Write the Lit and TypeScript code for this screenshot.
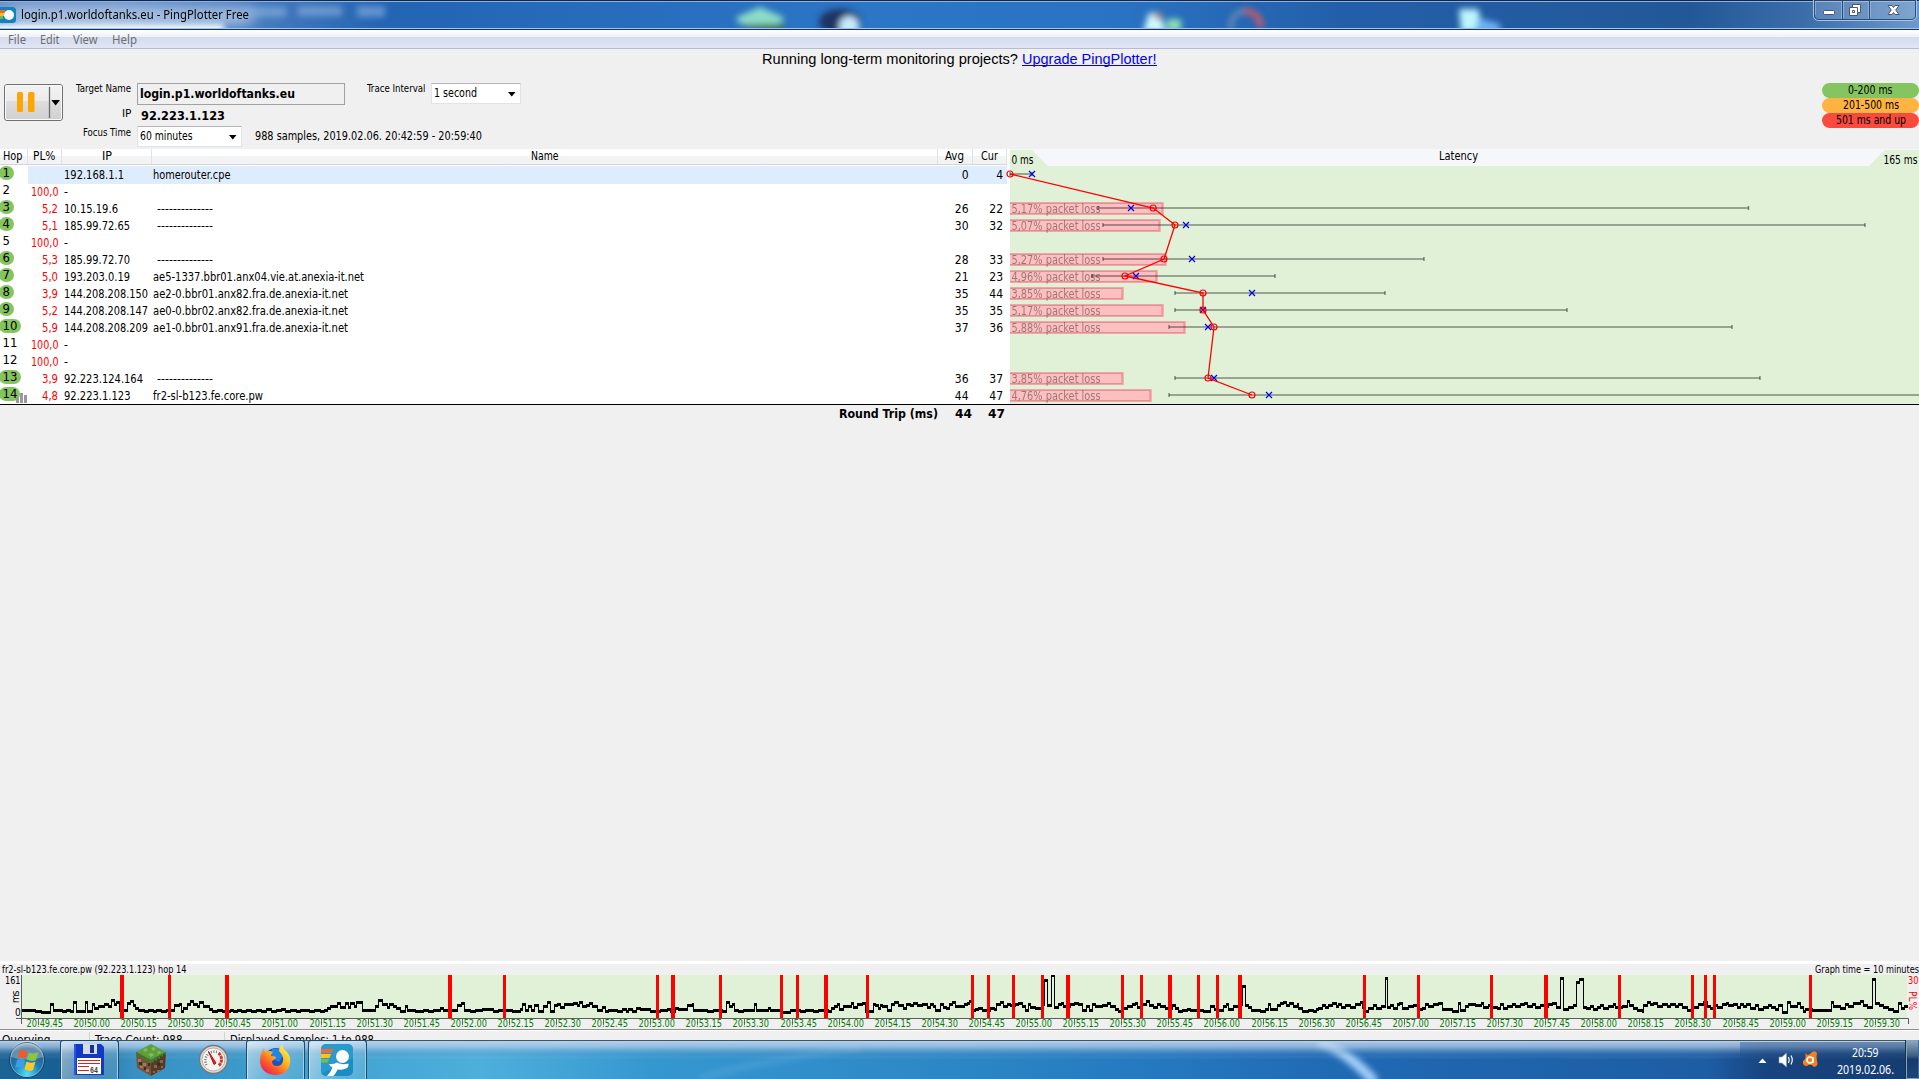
import { LitElement, html, svg, css, nothing } from "lit";
import { customElement } from "lit/decorators.js";

interface Hop {
  n: number;
  ok?: boolean;
  loss?: string;
  lossW?: number;
  ip: string;
  ipW: number;
  name?: string;
  nameW?: number;
  avg?: number;
  cur?: number;
  bar?: [string, number];
  span?: [number, number];
  avgX?: number;
  curX?: number;
}

const DASHES = "--------------";

// Horizontal values are pixels from the zero line of the latency plot.
const HOPS: Hop[] = [
  { n: 1, ok: true, ip: "192.168.1.1", ipW: 60, name: "homerouter.cpe", nameW: 77.5, avg: 0, cur: 4, span: [0, 22], avgX: 0, curX: 22 },
  { n: 2, loss: "100,0", lossW: 27.5, ip: "-", ipW: 4 },
  { n: 3, ok: true, loss: "5,2", lossW: 16, ip: "10.15.19.6", ipW: 54, name: DASHES, nameW: 56, avg: 26, cur: 22, bar: ["5,17% packet loss", 153.5], span: [88, 738.5], avgX: 143.2, curX: 121 },
  { n: 4, ok: true, loss: "5,1", lossW: 16, ip: "185.99.72.65", ipW: 66, name: DASHES, nameW: 56, avg: 30, cur: 32, bar: ["5,07% packet loss", 150.5], span: [93, 855], avgX: 165, curX: 176 },
  { n: 5, loss: "100,0", lossW: 27.5, ip: "-", ipW: 4 },
  { n: 6, ok: true, loss: "5,3", lossW: 16, ip: "185.99.72.70", ipW: 66, name: DASHES, nameW: 56, avg: 28, cur: 33, bar: ["5,27% packet loss", 156.5], span: [93, 414], avgX: 154, curX: 182 },
  { n: 7, ok: true, loss: "5,0", lossW: 16, ip: "193.203.0.19", ipW: 66, name: "ae5-1337.bbr01.anx04.vie.at.anexia-it.net", nameW: 211, avg: 21, cur: 23, bar: ["4,96% packet loss", 147.5], span: [82, 265], avgX: 115, curX: 126 },
  { n: 8, ok: true, loss: "3,9", lossW: 16, ip: "144.208.208.150", ipW: 84, name: "ae2-0.bbr01.anx82.fra.de.anexia-it.net", nameW: 195, avg: 35, cur: 44, bar: ["3,85% packet loss", 113.5], span: [165, 375], avgX: 193, curX: 242 },
  { n: 9, ok: true, loss: "5,2", lossW: 16, ip: "144.208.208.147", ipW: 84, name: "ae0-0.bbr02.anx82.fra.de.anexia-it.net", nameW: 195, avg: 35, cur: 35, bar: ["5,17% packet loss", 153.5], span: [165, 557], avgX: 193, curX: 193 },
  { n: 10, ok: true, loss: "5,9", lossW: 16, ip: "144.208.208.209", ipW: 84, name: "ae1-0.bbr01.anx91.fra.de.anexia-it.net", nameW: 195, avg: 37, cur: 36, bar: ["5,88% packet loss", 175.5], span: [159, 722], avgX: 204, curX: 198 },
  { n: 11, loss: "100,0", lossW: 27.5, ip: "-", ipW: 4 },
  { n: 12, loss: "100,0", lossW: 27.5, ip: "-", ipW: 4 },
  { n: 13, ok: true, loss: "3,9", lossW: 16, ip: "92.223.124.164", ipW: 79, name: DASHES, nameW: 56, avg: 36, cur: 37, bar: ["3,85% packet loss", 113.5], span: [165, 750], avgX: 198, curX: 204 },
  { n: 14, ok: true, loss: "4,8", lossW: 16, ip: "92.223.1.123", ipW: 66.5, name: "fr2-sl-b123.fe.core.pw", nameW: 110, avg: 44, cur: 47, bar: ["4,76% packet loss", 141.5], span: [159, 920], avgX: 242, curX: 259 },
];

// [left, width] of each lost-packet stripe on the timeline.
const LOST: [number, number][] = [
  [120, 4], [168, 3], [225, 4], [448, 4], [503, 3], [656, 3], [671, 4], [719, 3], [780, 3], [796, 3], [824, 4], [866, 3],
  [971, 3], [987, 3], [1012, 3], [1041, 3], [1066, 4], [1121, 3], [1140, 3], [1168, 4], [1197, 3], [1216, 3], [1238, 4],
  [1363, 3], [1417, 3], [1490, 3], [1544, 4], [1618, 3], [1691, 3], [1704, 3], [1713, 3], [1809, 3],
];

// Timeline samples in thirds of a pixel, one block per quarter: "start,level".
const SAMPLES: [number, string][] = [
  [0, "66,167 105,170 123,173 151,150 158,167 187,170 198,167 210,170 220,144 227,171 256,144 262,171 277,150 283,160 295,156 313,150 325,156 333,138 341,150 348,144 357,168 382,147 390,141 398,153 405,161 415,167 432,170 444,167 459,171 469,167 483,171 498,167 522,153 537,148 543,171 550,162 560,150 570,140 578,150 590,156 597,143 609,156 627,165 637,171 650,168 665,171 690,167 700,171 711,167 723,170 738,167 753,170 768,167 783,170 798,165 813,170 828,167 843,164 855,170 870,166 888,170 900,166 927,170 942,166 960,170 972,167 980,160 990,155 1010,147 1020,157 1035,147 1045,157 1050,147 1062,155 1068,144 1085,167 1125,156 1135,138 1145,150 1160,158 1167,150 1178,156 1188,160 1200,170 1214,156 1221,167 1245,171 1270,167 1285,171 1300,167 1320,160 1328,168 1372,153 1383,147 1392,168 1410,170 1425,168"],
  [480, "0,168 5,165 40,170 55,166 95,170 120,165 127,150 135,167 145,155 152,167 163,151 173,171 190,155 200,144 210,171 222,152 232,148 240,157 253,150 280,147 290,151 296,144 305,155 318,152 328,145 337,156 352,167 365,158 375,170 385,167 410,170 425,165 437,170 445,165 455,170 468,161 480,165 510,169 540,167 560,165 571,171 585,160 595,164 622,152 637,148 640,167 680,169 700,167 725,171 739,144 748,156 757,150 763,168 775,171 790,167 823,150 828,168 840,167 865,161 870,167 900,172 930,166 945,168 960,171 975,166 1000,169 1015,166 1045,171 1052,162 1062,156 1070,150 1078,163 1088,156 1112,147 1118,157 1130,150 1145,145 1155,171 1178,148 1185,152 1195,162 1200,151 1207,156 1220,168 1232,148 1243,142 1253,153 1270,160 1278,150 1290,153 1300,147 1310,153 1325,150 1340,157 1350,148 1358,155 1365,168 1380,150 1390,158 1398,162 1407,150 1415,144 1425,155"],
  [960, "0,155 12,148 20,145 26,139 33,167 45,164 55,162 65,166 90,160 103,163 108,148 120,142 128,155 140,148 150,152 165,150 175,146 187,155 195,168 204,150 210,157 225,162 243,150 252,76 260,152 273,62 281,157 295,150 302,146 308,155 330,150 342,145 355,148 365,167 378,156 388,168 397,148 405,156 425,153 440,146 450,155 465,163 475,169 490,160 500,155 515,150 525,145 532,157 545,150 558,141 567,153 580,158 592,150 600,155 615,162 636,152 645,160 653,171 665,168 680,163 690,167 730,171 750,155 762,163 775,166 790,156 798,148 805,165 820,155 833,150 846,94 854,152 865,158 873,168 900,171 915,163 923,150 930,165 950,151 960,147 968,142 978,152 987,145 998,155 1010,148 1015,160 1025,171 1045,168 1058,171 1068,165 1075,160 1085,153 1095,158 1105,152 1115,145 1127,155 1135,148 1143,158 1155,152 1170,157 1185,150 1200,144 1206,157 1210,171 1225,160 1240,153 1248,162 1262,156 1275,70 1282,157 1290,152 1300,160 1312,150 1318,145 1327,160 1345,155 1360,152 1372,163 1385,160 1395,150 1405,156 1420,150 1435,145"],
  [1440, "0,147 6,165 36,170 55,147 61,167 75,155 85,148 105,153 122,147 130,157 145,151 155,157 170,160 180,150 188,160 200,155 215,148 225,155 240,150 252,145 260,155 275,149 285,158 300,152 315,155 325,150 335,146 348,157 361,70 368,163 385,158 400,152 409,82 418,75 428,157 438,162 450,155 460,163 470,157 480,152 490,160 505,155 520,148 525,158 545,156 560,140 568,151 580,160 590,167 605,171 610,152 620,142 630,150 640,147 650,156 665,150 680,155 690,150 705,156 715,150 725,158 742,168 760,158 775,150 790,143 800,155 810,160 820,152 830,157 845,150 858,145 865,153 880,148 890,157 900,150 910,156 918,148 930,160 945,153 955,163 970,158 985,152 992,158 1005,163 1015,152 1025,172 1041,143 1050,155 1070,147 1080,158 1088,171 1095,165 1115,168 1172,143 1180,155 1200,160 1215,148 1225,155 1240,145 1260,140 1270,152 1280,157 1297,75 1306,146 1318,152 1330,157 1345,163 1358,171 1375,145 1383,160 1392,155 1400,155"],
];

const STEPS: [number, number][] = SAMPLES.flatMap(([origin, block]) =>
  block.split(" ").map((pair): [number, number] => {
    const [x, y] = pair.split(",").map(Number);
    return [origin + Math.round(x / 3), Math.round((y - 5) / 3) - 20];
  }),
);

const TICKS = Array.from({ length: 40 }, (_, i) => {
  const s = 49 * 60 + 45 + i * 15;
  const pad = (v: number) => String(v).padStart(2, "0");
  return { x: Math.floor(38.4 + i * 47.1), text: `20:${pad(Math.floor(s / 60))}.${pad(s % 60)}` };
});

/** A one-line caption set to a fixed advance width; its baseline is `base` pixels down. */
const label = (text: string, width: number, cls = "", base = 11) => html`
  <svg class="label ${cls}" width=${width} height=${base + 3}>
    <text x="0" y=${base} textLength=${width} lengthAdjust="spacingAndGlyphs">${text}</text>
  </svg>`;

@customElement("pp-titlebar")
export class PpTitlebar extends LitElement {
  static styles = css`
    :host { display: block; position: relative; height: 30px; overflow: hidden; }
    .glass { position: absolute; left: 0; top: 0; }
    .bar { position: relative; display: flex; align-items: flex-start; height: 30px; }
    .logo { margin: 7px 5px 0 0; flex: none; }
    .label { margin-top: 8px; overflow: visible; font: 13px "Noto Sans", "Open Sans", sans-serif; }
    .buttons { margin-left: auto; margin-right: 1px; }
  `;
  render() {
    return html`
      <svg class="glass" width="1919" height="30">
        <defs>
          <linearGradient id="sky">
            <stop offset="0" stop-color="#6f94c8" /><stop offset=".06" stop-color="#7096cb" />
            <stop offset=".2" stop-color="#2364b3" /><stop offset=".45" stop-color="#2c76c6" />
            <stop offset=".58" stop-color="#2a73c3" /><stop offset=".7" stop-color="#235fa9" />
            <stop offset=".88" stop-color="#225898" /><stop offset=".94" stop-color="#3b6da9" />
            <stop offset="1" stop-color="#6e99ca" />
          </linearGradient>
          <filter id="b3" x="-50%" y="-100%" width="200%" height="300%"><feGaussianBlur stdDeviation="3" /></filter>
          <filter id="b8" x="-20%" y="-100%" width="140%" height="300%"><feGaussianBlur stdDeviation="7" /></filter>
        </defs>
        <rect width="1919" height="30" fill="url(#sky)" />
        <rect x="10" y="9" width="244" height="14" rx="7" fill="#c9d9ef" opacity=".85" filter="url(#b8)" />
        <g filter="url(#b3)">
          <rect x="-10" y="24" width="234" height="12" fill="#f4ffff" />
          <g fill="#8fb2e0" opacity=".6">
            <rect x="244" y="7" width="42" height="10" /><rect x="298" y="6" width="44" height="10" /><rect x="357" y="6" width="28" height="11" />
          </g>
          <path d="M737 17L760 7L783 17V22L760 30L737 22Z" fill="#8bdcc8" />
          <path d="M738 25L760 31H784V24Z" fill="#446b52" />
          <ellipse cx="840" cy="22" rx="21" ry="13" fill="#1d3564" /><circle cx="849" cy="26" r="10" fill="#c9e9ff" />
          <path d="M1149 13H1160L1166 32H1143Z" fill="#d3f9ff" /><circle cx="1158" cy="16" r="4" fill="#b48d86" />
          <rect x="1167" y="19" width="14" height="12" fill="#8fe0b4" />
          <path d="M1232 30A16 14 0 0 1 1244 11" stroke="#7692b2" stroke-width="4" fill="none" />
          <path d="M1244 11A16 14 0 0 1 1260 28" stroke="#c95a6c" stroke-width="6" fill="none" />
          <path d="M1459 9H1478L1484 32H1461Z" fill="#bdf6ff" /><path d="M1478 18L1500 24V32H1475Z" fill="#6eb4f5" />
        </g>
        <rect width="1919" height="1" fill="#0d2550" /><rect y="1" width="1919" height="1" fill="#8fb2dc" />
        <rect y="28" width="1919" height="1" fill="#a8c4e6" /><rect y="29" width="1919" height="1" fill="#163358" />
      </svg>
      <div class="bar">
        <svg class="logo" width="16" height="17" viewBox="0 0 16 17">
          <rect x="-2" y="0" width="18" height="16" rx="3.500" fill="#1583bb" />
          <path d="M0 3H5V6H0Z" fill="#e8663c" /><path d="M0 6H4V9H0Z" fill="#f5c21e" /><path d="M0 9H3V12H0Z" fill="#72b94c" />
          <circle cx="9" cy="8" r="5" fill="#fff" />
        </svg>
        ${label("login.p1.worldoftanks.eu - PingPlotter Free", 228, "", 11)}
        <svg class="buttons" width="105" height="22" viewBox="0 0 105 22">
          <path d="M.5 0V15Q.5 20.500 6 20.500H98Q103.500 20.500 103.500 15V0" fill="#fff" fill-opacity=".13" stroke="#a9c3e2" />
          <path d="M1.500 1V15Q1.500 19.500 6 19.500H98Q102.500 19.500 102.500 15V1M29.500 1V19M56.500 1V19" fill="none" stroke="#294e80" />
          <path d="M2.500 1V15M28.500 1V19M30.500 1V18M55.500 1V19M57.500 1V18" stroke="#9db9da" opacity=".7" />
          <rect x="10.500" y="10.500" width="11" height="4" rx="1" fill="#fff" stroke="#4a5672" />
          <path d="M39.500 4.500H47.500V12.500H44.500V15.500H36.500V7.500H39.500Z" fill="#fff" stroke="#4a5672" />
          <path d="M39.500 7.500H44.500V12.500M39.500 10.500H41.500V12.500H39.500Z" fill="none" stroke="#4a5672" />
          <path d="M75 5.500H79L80.500 7.500L82 5.500H86L82.700 10L86 14.500H82L80.500 12.500L79 14.500H75L78.300 10Z" fill="#fff" stroke="#4a5672" />
        </svg>
      </div>`;
  }
}

@customElement("pp-toolbar")
export class PpToolbar extends LitElement {
  static styles = css`
    :host { display: block; height: 119px; background: #f0f0f0; font: 12px "DejaVu Sans Condensed", "DejaVu Sans", sans-serif; }
    .label { display: block; overflow: visible; flex: none; }
    .menu { display: flex; gap: 14px; height: 18px; padding-left: 7.500px; border-bottom: 1px solid #b4bdd3;
      background: linear-gradient(#fff 0, #edf1f7 7px, #d4dbed 7px, #e0e6f5 18px); }
    .menu .label { fill: #6e6e72; font: 12.500px "Noto Sans", "Open Sans", sans-serif; margin-top: 3px; }
    .banner { display: flex; gap: 4px; justify-content: center; height: 34px; }
    .promo { font: 15px "Liberation Sans", Arial, sans-serif; margin-top: 3px; }
    .link { fill: #00f; border-bottom: 1px solid #00f; height: 13px; }
    .controls { display: flex; height: 66px; padding-left: 4px; }
    .pause { margin-top: 1px; flex: none; }
    .fields { display: grid; grid-template-columns: 68px 208px; grid-template-rows: 24px 19px 23px; column-gap: 6px; }
    .caption { font-size: 10px; justify-self: end; }
    .input { display: block; box-sizing: border-box; height: 22px; border: 1px solid #a2a2a2; padding: 2px 0 0 2px; }
    .strong { font-weight: bold; font-size: 13px; }
    .ip { margin-left: 3.500px; }
    .row { display: flex; gap: 12.500px; }
    .select { display: flex; justify-content: space-between; box-sizing: border-box; height: 21px; background: #fff;
      border: 1px solid #e0e4ea; border-top-color: #b3b5bd; padding: 1px 4px 0 1.500px; flex: none; }
    .focus { width: 105px; }
    .interval { width: 89.500px; }
    .arrow { margin-top: 7px; }
    .trace { display: flex; gap: 6.400px; margin-left: 21.500px; align-items: flex-start; }
    .legend { margin-left: auto; width: 97px; }
    .pill { display: flex; justify-content: center; height: 15px; border-radius: 7.500px; }
    .good { background: #85c560; }
    .warn { background: #ffb340; }
    .bad { background: #f84b3e; }
  `;
  private arrow = html`<svg class="arrow" width="8" height="5"><path d="M0 0H7.500L3.750 4.500Z" fill="#000" /></svg>`;
  render() {
    return html`
      <div class="menu">${label("File", 18)}${label("Edit", 19.5)}${label("View", 24.5)}${label("Help", 25)}</div>
      <div class="banner">
        ${label("Running long-term monitoring projects?", 256, "promo", 12)}
        ${label("Upgrade PingPlotter!", 134.5, "promo link", 12)}
      </div>
      <div class="controls">
        <svg class="pause" width="59" height="37">
          <defs><linearGradient id="face" x2="0" y2="1">
            <stop offset="0" stop-color="#f3f3f3" /><stop offset=".46" stop-color="#ebebeb" />
            <stop offset=".46" stop-color="#dedede" /><stop offset="1" stop-color="#cfcfcf" />
          </linearGradient></defs>
          <rect x=".5" y=".5" width="58" height="36" rx="2.500" fill="url(#face)" stroke="#707070" />
          <rect x="1.500" y="1.500" width="56" height="34" rx="1.500" fill="none" stroke="#fafafa" />
          <rect x="13" y="8" width="6" height="20" rx="1.500" fill="#ffa500" /><rect x="24" y="8" width="6.500" height="20" rx="1.500" fill="#ffa500" />
          <path d="M45.500 3V34" stroke="#6b6b6b" stroke-width="1.300" /><path d="M47.300 16H56L51.650 21.500Z" fill="#000" />
        </svg>
        <div class="fields">
          ${label("Target Name", 55, "caption", 9)}
          <div class="input">${label("login.p1.worldoftanks.eu", 155, "strong", 12)}</div>
          ${label("IP", 9.5, "caption", 10)}
          ${label("92.223.1.123", 84, "strong ip", 13)}
          ${label("Focus Time", 48, "caption", 10)}
          <div class="row">
            <div class="select focus">${label("60 minutes", 52.5, "", 12)}${this.arrow}</div>
            ${label("988 samples, 2019.02.06. 20:42:59 - 20:59:40", 227, "", 14)}
          </div>
        </div>
        <div class="trace">
          ${label("Trace Interval", 58.5, "caption", 9)}
          <div class="select interval">${label("1 second", 43, "", 12)}${this.arrow}</div>
        </div>
        <div class="legend">
          <div class="pill good">${label("0-200 ms", 44.5)}</div>
          <div class="pill warn">${label("201-500 ms", 56)}</div>
          <div class="pill bad">${label("501 ms and up", 70)}</div>
        </div>
      </div>`;
  }
}

@customElement("pp-hops")
export class PpHops extends LitElement {
  static styles = css`
    :host { display: block; width: 1007px; background: #fff; font: 12px "DejaVu Sans Condensed", "DejaVu Sans", sans-serif; }
    .label { display: block; overflow: visible; }
    .line { display: grid; grid-template-columns: 28px 34px 90px 786px 34.500px 34.500px; height: 17px; }
    .head { box-sizing: border-box; height: 16px; border-bottom: 1px solid #d5d5d5; margin-bottom: 1px;
      background: linear-gradient(#fff 45%, #f3f4f6 45%, #f1f2f4); }
    .head > div { display: flex; justify-content: center; border-right: 1px solid #dfe1e5; box-sizing: border-box; }
    .head > .first { justify-content: flex-start; padding-left: 3px; }
    .badge { display: flex; align-items: flex-start; }
    .num { box-sizing: border-box; height: 14px; padding: 0 4px 0 2.500px; font-size: 13px; line-height: 13px; }
    .ok { background: #85c560; border-radius: 7px; margin-left: -1px; padding-left: 3.500px; min-width: 14px; }
    .bars { margin: 6px 0 0 -4px; flex: none; }
    .pick > div:not(.badge) { background: #deedfe; }
    .loss { display: flex; justify-content: flex-end; padding-right: 4px; fill: #f00; }
    .ip { padding-left: 2px; }
    .name { padding-left: 1px; }
    .dash { padding-left: 5px; }
    .val { text-align: right; line-height: 18px; padding-right: 4px; }
    .foot { display: flex; justify-content: flex-end; height: 20px; border-top: 1px solid #000; background: #f0f0f0;
      font-weight: bold; font-size: 13px; padding: 0 2px 0 0; gap: 16.500px; box-sizing: border-box; }
  `;
  render() {
    return html`
      <div class="line head">
        <div class="first">${label("Hop", 19.5)}</div><div>${label("PL%", 22.5)}</div><div>${label("IP", 10)}</div>
        <div>${label("Name", 27.5)}</div><div>${label("Avg", 19)}</div><div>${label("Cur", 17)}</div>
      </div>
      ${HOPS.map((h) => html`
        <div class="line ${h.n === 1 ? "pick" : ""}">
          <div class="badge">
            <span class="num ${h.ok ? "ok" : ""}">${h.n}</span>
            ${h.n === 14 ? html`<svg class="bars" width="12" height="10"><path d="M0 4H3V10H0ZM4 0H7V10H4ZM8 2H11V10H8Z" fill="#999" /></svg>` : nothing}
          </div>
          <div class="loss">${h.loss ? label(h.loss, h.lossW!, "", 13) : nothing}</div>
          <div class="ip">${label(h.ip, h.ipW, "", 13)}</div>
          <div class=${h.name === DASHES ? "dash" : "name"}>${h.name ? label(h.name, h.nameW!, "", 13) : nothing}</div>
          <div class="val">${h.avg ?? nothing}</div>
          <div class="val">${h.cur ?? nothing}</div>
        </div>`)}
      <div class="foot">${label("Round Trip (ms)", 99, "", 13)}${label("44", 17, "", 13)}${label("47", 17, "", 13)}</div>`;
  }
}

@customElement("pp-latency")
export class PpLatency extends LitElement {
  static styles = css`
    :host { display: block; flex: 1; padding-left: 3px; background: #fff; font: 12px "DejaVu Sans Condensed", "DejaVu Sans", sans-serif; }
    .plot { display: block; overflow: visible; }
    .base { background: #f0f0f0; border-top: 1px solid #000; height: 19px; margin-left: -3px; }
    .loss { fill: #000; opacity: .38; }
  `;
  render() {
    const y = (n: number) => 25 + (n - 1) * 17;
    const route = HOPS.filter((h) => h.ok).map((h) => `${h.avgX},${y(h.n)}`).join(" ");
    return html`
      <svg class="plot" width="909" height="255">
        <rect width="909" height="17" fill="#f5f7fa" />
        <path d="M0 1H22L26 5L38 17H0ZM859 17L875 1H909V17Z" fill="#e0f1d7" />
        <rect y="17" width="909" height="238" fill="#e0f1d7" />
        <text x="1.500" y="15" textLength="22" lengthAdjust="spacingAndGlyphs">0 ms</text>
        <text x="429" y="11" textLength="39" lengthAdjust="spacingAndGlyphs">Latency</text>
        <text x="873.500" y="15" textLength="34" lengthAdjust="spacingAndGlyphs">165 ms</text>
        ${HOPS.filter((h) => h.bar).map((h) => svg`
          <path d="M0 ${y(h.n) - 6}H${h.bar![1] + .5}V${y(h.n) + 7}H0Z" fill="#fdbfbf" />
          <path d="M0 ${y(h.n) - 5}H${h.bar![1] - 1}V${y(h.n) + 6}H0" fill="none" stroke="#f5a3a5" stroke-width="2" />
          <path d="M0 ${y(h.n) - 4.5}H${h.bar![1] - 1.5}V${y(h.n) + 5.5}H0" fill="none" stroke="#c98a8a" stroke-width="1" opacity=".6" />
          <text class="loss" x="1.500" y=${y(h.n) + 5} textLength="89" lengthAdjust="spacingAndGlyphs">${h.bar![0]}</text>`)}
        ${HOPS.filter((h) => h.span).map((h) => svg`
          <path d="M${h.span![0]} ${y(h.n)}H${Math.min(h.span![1], 909)}" stroke="#000" stroke-opacity=".32" stroke-width="2" />
          <path d="M${h.span![0]} ${y(h.n) - 2}v4M${h.span![1]} ${y(h.n) - 2}v4" stroke="#222" stroke-opacity=".5" stroke-width="1.500" />
          <path d="M${h.curX! - 3} ${y(h.n) - 3}l6 6m0 -6l-6 6" stroke="#00e" stroke-width="1.200" fill="none" />`)}
        <polyline points=${route} fill="none" stroke="#f00" stroke-width="1.300" />
        ${HOPS.filter((h) => h.ok).map((h) => svg`
          <circle cx=${h.avgX!} cy=${y(h.n)} r="3" fill="none" stroke="#f00" stroke-width="1.200" />`)}
      </svg>
      <div class="base"></div>`;
  }
}

@customElement("pp-timeline")
export class PpTimeline extends LitElement {
  static styles = css`
    :host { display: block; height: 79px; box-sizing: border-box; border-top: 3px solid #fff; background: #f0f0f0; overflow: hidden;
      font: 12px "DejaVu Sans Condensed", "DejaVu Sans", sans-serif; }
    .label { display: block; overflow: visible; flex: none; }
    .title { display: flex; justify-content: space-between; height: 11px; padding: 0 0 0 2px; font-size: 10px; }
    .graph { display: block; height: 54px; font-size: 10px; }
    .time { fill: #008000; }
    .red { fill: #f00; }
    .status { display: flex; border-top: 1px solid #8e8e8e; height: 10px; padding-left: 2px; box-shadow: inset 0 1px #fff; }
    .cell { height: 9px; margin-top: 2px; border-right: 1px solid #d2d2d2; box-sizing: border-box; }
    .cell .label { font-size: 13px; }
    .one { width: 88px; }
    .two { width: 135px; padding-left: 5px; }
    .three { padding-left: 5px; border: 0; }
  `;
  render() {
    const line = STEPS.map(([x, y], i) => {
      const next = STEPS[i + 1];
      if (!next) return "";
      const top = Math.min(y, next[1]);
      return `M${x} ${y}H${next[0] + 1}v3H${x}Z` + `M${next[0]} ${top}h1V${Math.max(y, next[1]) + 3}h-1Z`;
    }).join("");
    return html`
      <div class="title">
        ${label("fr2-sl-b123.fe.core.pw (92.223.1.123) hop 14", 184.5, "", 9)}
        ${label("Graph time = 10 minutes", 104, "", 9)}
      </div>
      <svg class="graph" width="1919" height="54">
        <rect x="22" width="1885" height="43" fill="#e0f1d7" />
        ${TICKS.map((t) => svg`<path d="M${t.x + .5} 43v7" stroke="#6a6a6a" />
          <text class="time" x=${t.x - 11.5} y="52" textLength="36.500" lengthAdjust="spacingAndGlyphs">${t.text}</text>`)}
        <path d=${line} fill="#000" />
        ${LOST.map(([x, w]) => svg`<rect x=${x} width=${w} height="43" fill="#f00" />`)}
        <path d="M21.500 0V49M16 43.500H1908.500V49" fill="none" stroke="#5c5c5c" />
        <text x="5" y="9" textLength="15.500" lengthAdjust="spacingAndGlyphs">161</text>
        <text x="15" y="41">0</text>
        <text transform="translate(19 28) rotate(-90)" textLength="12.500">ms</text>
        <text class="red" x="1908" y="9" textLength="10.500" lengthAdjust="spacingAndGlyphs">30</text>
        <text class="red" transform="translate(1909 16) rotate(90)" textLength="19" lengthAdjust="spacingAndGlyphs">PL%</text>
      </svg>
      <div class="status">
        <div class="cell one">${label("Querying", 48.5, "", 12)}</div>
        <div class="cell two">${label("Trace Count: 988", 87.5, "", 12)}</div>
        <div class="cell three">${label("Displayed Samples: 1 to 988", 144, "", 12)}</div>
      </div>`;
  }
}

@customElement("win-taskbar")
export class WinTaskbar extends LitElement {
  static styles = css`
    :host { display: block; position: relative; height: 39px; overflow: hidden; }
    .glass { position: absolute; left: 0; top: 0; }
    .bar { position: relative; display: flex; height: 39px; }
    .start { width: 60px; }
    .btn { box-sizing: border-box; width: 59px; height: 39px; padding: 4px 2px 0 0; text-align: center; }
    .open { border: 1px solid #1d4b6e; border-bottom: 0; border-radius: 3px 3px 0 0; padding-top: 3px;
      box-shadow: inset 1px 1px #c9dfee, inset -1px 0 #a8cde3; background: linear-gradient(115deg, #ffffff88, #ffffff30 60%, #ffffff18); }
    .cube { width: 65px; }
    .gauge { width: 62px; }
    .gap { margin-left: 3px; }
    .tray { display: flex; margin-left: auto; }
    .clock { display: flex; flex-direction: column; align-items: center; width: 57px; margin: 0 12px 0 18px; fill: #fff;
      font: 12px "Noto Sans", "Open Sans", sans-serif; }
    .label { display: block; overflow: visible; margin-top: 6px; flex: none; }
    .date { margin-top: 0; }
    .peek { width: 13px; box-sizing: border-box; border: 1px solid #86a2bd; border-right-color: #46698f; box-shadow: -1px 0 #17324f;
      background: linear-gradient(#8da7bd, #3d5f82 40%, #17396a 50%, #1c4677); }
    .icons { margin-top: 8px; }
  `;
  render() {
    return html`
      <svg class="glass" width="1919" height="39">
        <defs>
          <linearGradient id="deep">
            <stop offset="0" stop-color="#1c6394" /><stop offset=".03" stop-color="#185f94" /><stop offset=".07" stop-color="#3891c2" />
            <stop offset=".13" stop-color="#3b9bcb" /><stop offset=".25" stop-color="#4fafdb" /><stop offset=".34" stop-color="#3597d0" />
            <stop offset=".5" stop-color="#2c86c5" /><stop offset=".6" stop-color="#2579bf" /><stop offset=".7" stop-color="#2069b3" />
            <stop offset=".89" stop-color="#1d5da4" /><stop offset=".92" stop-color="#184480" /><stop offset="1" stop-color="#153c70" />
          </linearGradient>
          <linearGradient id="shine" x2="0" y2="1">
            <stop offset="0" stop-color="#c8dcf2" stop-opacity=".9" /><stop offset=".18" stop-color="#b4cdea" stop-opacity=".7" />
            <stop offset=".38" stop-color="#6b9cc4" stop-opacity=".15" /><stop offset=".5" stop-color="#fff" stop-opacity="0" />
          </linearGradient>
          <filter id="soft" x="-30%" y="-30%" width="160%" height="160%"><feGaussianBlur stdDeviation="3" /></filter>
        </defs>
        <rect width="1919" height="39" fill="url(#deep)" />
        <path d="M1318 0Q1345 10 1375 42" stroke="#a5d0fa" stroke-width="10" fill="none" filter="url(#soft)" />
        <path d="M700 38Q770 18 860 8" stroke="#7dbbe6" stroke-width="4" fill="none" opacity=".4" filter="url(#soft)" />
        <rect width="1740" height="39" fill="url(#shine)" /><rect x="1740" width="179" height="39" fill="url(#shine)" opacity=".6" />
        <rect width="1919" height="1" fill="#3d5566" /><rect y="1" width="1919" height="1" fill="#b7cfe0" />
      </svg>
      <div class="bar">
        <svg class="start" width="60" height="39">
          <defs><radialGradient id="orb" cy=".9" r=".9">
            <stop offset="0" stop-color="#52e0f8" /><stop offset=".45" stop-color="#1c7bb5" /><stop offset=".8" stop-color="#2a5f8c" /><stop offset="1" stop-color="#9fc1d4" />
          </radialGradient></defs>
          <circle cx="27" cy="20" r="17.500" fill="url(#orb)" stroke="#183f60" />
          <circle cx="27" cy="20" r="16.500" fill="none" stroke="#9cc4d8" stroke-opacity=".6" />
          <path d="M10.500 17A16.500 16.500 0 0 1 43.500 17Q27 22 10.500 17Z" fill="#fff" opacity=".28" />
          <path d="M19.500 11Q23 9 27.500 11.500L25.500 19Q21.500 16.500 17.500 18.500Z" fill="#ec5b2b" />
          <path d="M29 12.500Q33.500 14.500 38.500 12L36 20Q31.500 22 27 19.500Z" fill="#8cc63e" />
          <path d="M17 20Q21 18 25 20.500L23 28.500Q19 26 15 28Z" fill="#3aa0e3" />
          <path d="M26.500 21.500Q31 24 35.500 21.500L33 30Q29 32 24.500 29.500Z" fill="#fcc828" />
        </svg>
        <div class="btn open">
          <svg width="32" height="33" viewBox="0 0 32 33">
            <path d="M1 0H28L31 3V31H1Z" fill="#1238c8" /><path d="M1 0H3V31H1Z" fill="#2456e8" />
            <rect x="10" y="0" width="14" height="10" fill="#d7dce4" /><rect x="17" y="1" width="4" height="8" fill="#1430a8" />
            <rect x="4" y="14" width="24" height="16" fill="#fff" /><path d="M5 16.500H27M5 19.500H27M5 22.500H27M5 26.500H16" stroke="#d42222" />
            <rect x="16" y="22" width="12" height="8" fill="#fff" />
            <text x="17" y="29" font-family="Liberation Mono" font-size="9" font-weight="bold" fill="#444" text-anchor="start" textLength="8" lengthAdjust="spacingAndGlyphs">64</text>
          </svg>
        </div>
        <div class="btn cube">
          <svg width="32" height="33" viewBox="0 0 32 33">
            <path d="M1 8L16 0L31 8L16 16Z" fill="#5e9e3c" /><path d="M1 8L16 16V32L2 24Z" fill="#76543a" /><path d="M31 8L16 16V32L30 24Z" fill="#563a28" />
            <path d="M1 8L16 16V19L13 18V16L10 17V14L7 15V12L4 13V10L1 11ZM31 8L16 16V19L19 18V16L22 17V14L25 15V12L28 13V10L31 11Z" fill="#3f7a2c" />
            <path d="M8 6L11 4L13 6L10 8ZM16 4L19 3L21 5L18 7ZM13 10L17 9L19 11L16 13ZM22 8L25 7L26 9L23 10Z" fill="#81bd55" />
            <path d="M3 15h3v3H3ZM8 19h3v3H8ZM11 25h3v3h-3ZM5 22h3v2H5Z" fill="#a27c5c" /><path d="M19 21h3v3h-3ZM25 16h3v3h-3ZM22 26h3v2h-3ZM18 27h2v2h-2ZM26 22h2v2h-2Z" fill="#8a6548" />
            <path d="M4 18h3v3H4ZM9 23h2v3H9ZM13 19h2v3h-2ZM22 19h3v3h-3Z" fill="#402c1e" />
          </svg>
        </div>
        <div class="btn gauge">
          <svg width="32" height="32" viewBox="0 0 32 32">
            <circle cx="15.500" cy="15.500" r="14" fill="#dcdcda" stroke="#77797c" stroke-width="1.500" /><circle cx="15.500" cy="15.500" r="11.500" fill="#f6f4f1" stroke="#b0b0b0" />
            <path d="M8.500 21A9 9 0 0 1 19 8" fill="none" stroke="#777" stroke-width="2.500" stroke-dasharray="1 1.500" />
            <path d="M20.500 9A8.500 8.500 0 0 1 20.500 22" fill="none" stroke="#d03a2c" stroke-width="3" stroke-dasharray="3 .7" />
            <path d="M10.500 7.500L18 19L16 20.500Z" fill="#d22" stroke="#b11" />
          </svg>
        </div>
        <div class="btn open">
          <svg width="32" height="32" viewBox="0 0 32 32">
            <defs><linearGradient id="fox" x1=".9" y1=".1" x2=".2" y2="1">
              <stop offset="0" stop-color="#fff14a" /><stop offset=".4" stop-color="#ffb01c" /><stop offset=".7" stop-color="#ff5b2a" /><stop offset="1" stop-color="#e8175f" />
            </linearGradient></defs>
            <circle cx="17" cy="16" r="12" fill="#2250b8" /><path d="M13 5Q21 3 25 10L20 18L12 14Z" fill="#1e86e6" />
            <path d="M3 8Q4 5 5 4Q5 7 7 8Q10 6 14 8Q12 10 12 12Q15 12 17 13Q17 15 13 17Q13 22 18 22Q23 22 24 17Q25 12 20 7Q20 3 23 1Q24 5 27 7Q32 12 31 19Q29 31 16 31Q2 30 1 17Q1 12 3 8Z" fill="url(#fox)" />
          </svg>
        </div>
        <div class="btn open gap">
          <svg width="32" height="33" viewBox="0 0 32 33">
            <rect width="32" height="32" rx="5" fill="#1b8cc4" /><path d="M6 0H26Q32 0 32 6V14L0 30V6Q0 0 6 0Z" fill="#33a3d4" opacity=".6" />
            <path d="M0 5H12.500L11 9H0Z" fill="#ee6b2d" /><path d="M0 10H10L8.500 14H0Z" fill="#f7c51e" /><path d="M0 15H8L6.500 18.500H0Z" fill="#7bbd4a" />
            <circle cx="21.500" cy="12.500" r="6.500" fill="#fff" />
            <path d="M8 20Q13 20.500 16 18.500Q21 21.500 27.500 19.500Q28 23 25 24.500Q20 26.500 16.500 25.500Q14 31 12 32H6Q10 28 11.500 23.500Q9 22.500 8 20Z" fill="#fff" />
          </svg>
        </div>
        <div class="tray">
          <svg class="icons" width="64" height="26">
            <path d="M3.500 15L7.500 10.500L11.500 15Z" fill="#fff" />
            <path d="M24 9H27L31.500 5V19L27 15H24Z" fill="#fff" stroke="#8c9bb0" stroke-width=".6" /><path d="M33.500 9Q35 12 33.500 15M36 7.500Q38.500 12 36 16.500" stroke="#fff" fill="none" stroke-width="1.200" />
            <path d="M50 5Q52 8 55 6Q59 1 62 5Q61 9 62 13Q64 18 59 19Q56 15 52 18Q47 18 48 13Q52 10 50 5Z" fill="#f77e1a" />
            <circle cx="55" cy="12" r="3" fill="none" stroke="#fff" stroke-width="1.600" /><path d="M58 9v6" stroke="#fff" stroke-width="1.600" />
          </svg>
          <div class="clock">${label("20:59", 26.5)}${label("2019.02.06.", 57, "date", 14)}</div>
          <div class="peek"></div>
        </div>
      </div>`;
  }
}

@customElement("app-root")
export class AppRoot extends LitElement {
  static styles = css`
    :host { display: flex; flex-direction: column; width: 1919px; height: 1079px; background: #f0f0f0; overflow: hidden; }
    .trace { display: flex; }
    .space { flex: 1; }
  `;
  render() {
    return html`
      <pp-titlebar></pp-titlebar>
      <pp-toolbar></pp-toolbar>
      <div class="trace"><pp-hops></pp-hops><pp-latency></pp-latency></div>
      <div class="space"></div>
      <pp-timeline></pp-timeline>
      <win-taskbar></win-taskbar>`;
  }
}
